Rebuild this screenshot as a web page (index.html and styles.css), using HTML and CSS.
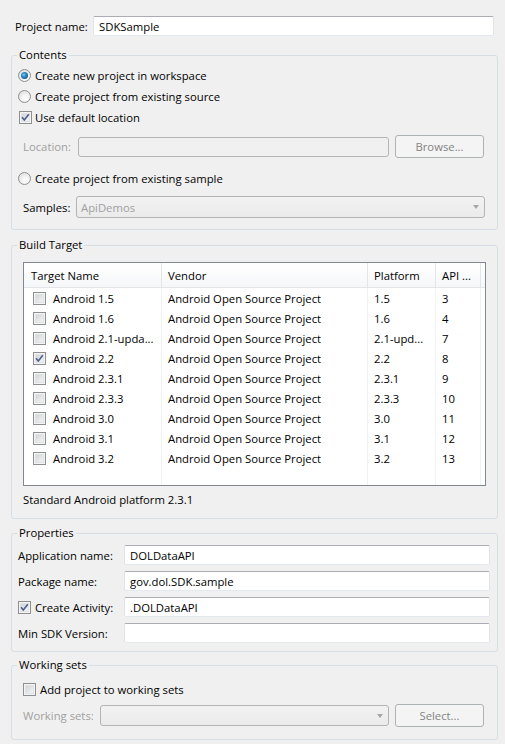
FILE: index.html
```html
<!DOCTYPE html>
<html>
<head>
<meta charset="utf-8">
<link rel="stylesheet" href="styles.css">
</head>
<body>
<div class="page">
  <div class="name-row">
    <span class="lbl name-lbl">Project name:</span>
    <input class="text" type="text" value="SDKSample">
  </div>

  <fieldset class="group">
    <legend>Contents</legend>
    <div class="gbody contents">
      <div class="opt"><span class="radio on"><span class="dot"></span></span><span>Create new project in workspace</span></div>
      <div class="opt"><span class="radio"></span><span>Create project from existing source</span></div>
      <div class="opt"><span class="cb cb-nudge on"><svg viewBox="0 0 11 11"><path d="M2 5.2 L4.3 8 L8.8 2.2" fill="none" stroke="#4b5f8e" stroke-width="1.6"/></svg></span><span>Use default location</span></div>
      <div class="field-row loc-row">
        <span class="lbl dis loc-lbl">Location:</span>
        <input class="text disabled" type="text" disabled>
        <button class="btn" disabled>Browse...</button>
      </div>
      <div class="opt sample-opt"><span class="radio"></span><span>Create project from existing sample</span></div>
      <div class="field-row samples-row">
        <span class="lbl samples-lbl">Samples:</span>
        <div class="combo"><span class="combo-text">ApiDemos</span><span class="arrow"></span></div>
      </div>
    </div>
  </fieldset>

  <fieldset class="group build">
    <legend>Build Target</legend>
    <div class="gbody targets">
      <div class="table-box">
        <table class="grid">
          <colgroup><col class="c1"><col class="c2"><col class="c3"><col class="c4"><col></colgroup>
          <thead>
            <tr><th class="first">Target Name</th><th>Vendor</th><th>Platform</th><th>API ...</th><th class="fill"></th></tr>
          </thead>
          <tbody>
            <tr><td class="first"><span class="cb"></span>Android 1.5</td><td>Android Open Source Project</td><td>1.5</td><td>3</td><td class="fill"></td></tr>
            <tr><td class="first"><span class="cb"></span>Android 1.6</td><td>Android Open Source Project</td><td>1.6</td><td>4</td><td class="fill"></td></tr>
            <tr><td class="first"><span class="cb"></span>Android 2.1-upda...</td><td>Android Open Source Project</td><td>2.1-upd...</td><td>7</td><td class="fill"></td></tr>
            <tr><td class="first"><span class="cb on"><svg viewBox="0 0 11 11"><path d="M2 5.2 L4.3 8 L8.8 2.2" fill="none" stroke="#4b5f8e" stroke-width="1.6"/></svg></span>Android 2.2</td><td>Android Open Source Project</td><td>2.2</td><td>8</td><td class="fill"></td></tr>
            <tr><td class="first"><span class="cb"></span>Android 2.3.1</td><td>Android Open Source Project</td><td>2.3.1</td><td>9</td><td class="fill"></td></tr>
            <tr><td class="first"><span class="cb"></span>Android 2.3.3</td><td>Android Open Source Project</td><td>2.3.3</td><td>10</td><td class="fill"></td></tr>
            <tr><td class="first"><span class="cb"></span>Android 3.0</td><td>Android Open Source Project</td><td>3.0</td><td>11</td><td class="fill"></td></tr>
            <tr><td class="first"><span class="cb"></span>Android 3.1</td><td>Android Open Source Project</td><td>3.1</td><td>12</td><td class="fill"></td></tr>
            <tr><td class="first"><span class="cb"></span>Android 3.2</td><td>Android Open Source Project</td><td>3.2</td><td>13</td><td class="fill"></td></tr>
            <tr class="filler"><td></td><td></td><td></td><td></td><td class="fill"></td></tr>
          </tbody>
        </table>
      </div>
      <div class="desc">Standard Android platform 2.3.1</div>
    </div>
  </fieldset>

  <fieldset class="group props">
    <legend>Properties</legend>
    <div class="gbody properties">
      <div class="prop-row"><span class="lbl prop-lbl">Application name:</span><input class="text" type="text" value="DOLDataAPI"></div>
      <div class="prop-row"><span class="lbl prop-lbl">Package name:</span><input class="text" type="text" value="gov.dol.SDK.sample"></div>
      <div class="prop-row"><span class="lbl prop-lbl check-lbl"><span class="cb on"><svg viewBox="0 0 11 11"><path d="M2 5.2 L4.3 8 L8.8 2.2" fill="none" stroke="#4b5f8e" stroke-width="1.6"/></svg></span>Create Activity:</span><input class="text" type="text" value=".DOLDataAPI"></div>
      <div class="prop-row"><span class="lbl prop-lbl">Min SDK Version:</span><input class="text" type="text" value=""></div>
    </div>
  </fieldset>

  <fieldset class="group wsets">
    <legend>Working sets</legend>
    <div class="gbody working">
      <div class="opt ws-opt"><span class="cb"></span><span>Add project to working sets</span></div>
      <div class="field-row ws-row">
        <span class="lbl dis ws-lbl">Working sets:</span>
        <div class="combo ws-combo"><span class="combo-text"></span><span class="arrow"></span></div>
        <button class="btn" disabled>Select...</button>
      </div>
    </div>
  </fieldset>
</div>
</body>
</html>
```

FILE: styles.css
```css
html, body {
  margin: 0;
  padding: 0;
  background: #f0f0f0;
}
body {
  font-family: "Open Sans", "Noto Sans", "Liberation Sans", sans-serif;
  font-size: 11.3px;
  color: #000;
  width: 505px;
  height: 744px;
  overflow: hidden;
}
.page {
  padding: 16px 7px 0 11px;
}
.lbl {
  flex: none;
  white-space: nowrap;
}
.dis {
  color: #a0a0a0;
}

/* project name */
.name-row {
  display: flex;
  align-items: center;
  height: 20px;
  padding: 0 4px;
}
.name-lbl {
  width: 78px;
}

/* text boxes */
.text {
  flex: 1;
  min-width: 0;
  box-sizing: border-box;
  height: 20px;
  margin: 0;
  padding: 0 5px;
  font: inherit;
  color: #000;
  background: #fff;
  border: 1px solid #e2e3ea;
  border-top-color: #abadb3;
  border-bottom-color: #e3e9ef;
  border-radius: 2px;
  outline: none;
}
.text.disabled {
  background: #f0f0f0;
  border: 1px solid #b5b5b5;
  border-radius: 3px;
}

/* groups */
.group {
  margin: 11px 0 0;
  padding: 0;
  border: 1px solid #d5dfe5;
  border-radius: 3px;
  min-width: 0;
}
.group legend {
  margin-left: 5px;
  padding: 0 2px;
  height: 16px;
  line-height: 16px;
}
.build { margin-top: 7px; }
.props { margin-top: 6px; }
.wsets { margin-top: 5px; }

.gbody {
  display: flex;
  flex-direction: column;
}
.contents {
  padding: 2px 13px 11px 6px;
}

.opt {
  display: flex;
  align-items: center;
  height: 21px;
  gap: 4px;
}
.sample-opt { margin-top: 10px; }

/* radio */
.radio {
  flex: none;
  position: relative;
  box-sizing: border-box;
  width: 13px;
  height: 13px;
  border-radius: 50%;
  border: 1px solid #8e8f8f;
  background: radial-gradient(circle at 60% 65%, #ffffff 0%, #f2f2f2 40%, #d6d6d6 100%);
}
.radio .dot {
  position: absolute;
  left: 2px;
  top: 2px;
  width: 7px;
  height: 7px;
  border-radius: 50%;
  background: radial-gradient(circle at 40% 40%, #7fd0f7 0%, #2a8ccc 35%, #0c3e66 100%);
}

/* checkbox */
.cb {
  flex: none;
  display: inline-block;
  box-sizing: border-box;
  width: 13px;
  height: 13px;
  border: 1px solid #8e8f8f;
  background: linear-gradient(135deg, #c8cbd0 0%, #e6e7e9 55%, #fafafa 100%);
  box-shadow: inset 0 0 0 1px #f4f4f4, inset 0 0 0 2px #e2e3e5;
  vertical-align: middle;
  position: relative;
}
.cb svg {
  position: absolute;
  left: 0;
  top: 0;
  width: 11px;
  height: 11px;
}
.cb-nudge { margin-left: 1px; margin-right: -1px; }

/* field rows */
.field-row {
  display: flex;
  align-items: center;
}
.loc-row {
  margin-top: 7px;
  height: 23px;
  padding-left: 5px;
}
.loc-lbl { width: 55px; }
.samples-row {
  margin-top: 7px;
  height: 22px;
  padding-left: 5px;
  margin-right: -1px;
}
.samples-lbl { width: 53px; }

/* buttons */
.btn {
  flex: none;
  box-sizing: border-box;
  width: 89px;
  height: 23px;
  margin: 0 0 0 6px;
  padding: 0;
  font: inherit;
  color: #838383;
  background: #f4f4f4;
  border: 1px solid #adb2b5;
  border-radius: 3px;
}

/* combo */
.combo {
  flex: 1;
  min-width: 0;
  box-sizing: border-box;
  height: 22px;
  display: flex;
  align-items: center;
  padding: 0 5px 0 4px;
  border: 1px solid #b4b4b4;
  border-radius: 3px;
  background: linear-gradient(#f2f2f2, #ebebeb);
  color: #a0a0a0;
}
.combo-text { flex: 1; }
.arrow {
  width: 0;
  height: 0;
  border-left: 3.5px solid transparent;
  border-right: 3.5px solid transparent;
  border-top: 4px solid #a6a6a6;
}

/* build target */
.targets {
  padding: 9px 11px 10px 11px;
}
.table-box {
  height: 224px;
  box-sizing: border-box;
  border: 1px solid #828790;
  background: #fff;
  overflow: hidden;
}
.grid {
  width: 100%;
  height: 100%;
  table-layout: fixed;
  border-collapse: separate;
  border-spacing: 0;
  font: inherit;
}
.c1 { width: 138px; }
.c2 { width: 206px; }
.c3 { width: 68px; }
.c4 { width: 45px; }
.grid th {
  box-sizing: border-box;
  height: 25px;
  padding: 0 0 0 6px;
  text-align: left;
  font-weight: normal;
  white-space: nowrap;
  overflow: hidden;
  background: linear-gradient(#ffffff, #f6f7f9);
  border-right: 1px solid #e3e5e8;
  border-bottom: 1px solid #e3e5e8;
}
.grid th.first { padding-left: 7px; }
.grid th.fill { border-right: none; }
.grid td {
  height: 20px;
  padding: 0 0 0 6px;
  white-space: nowrap;
  overflow: hidden;
  border-right: 1px solid #f0f2f5;
}
.grid td.first {
  padding-left: 9px;
}
.grid td.first .cb {
  margin-right: 7px;
  margin-top: -2px;
}
.grid td.fill { border-right: none; }
.grid tr.filler td { height: auto; }

.desc {
  margin-top: 6px;
  height: 16px;
  line-height: 16px;
}

/* properties */
.properties {
  padding: 4px 7px 8px 6px;
  gap: 6px;
}
.prop-row {
  display: flex;
  align-items: center;
  height: 20px;
}
.prop-lbl { width: 106px; }
.check-lbl {
  display: flex;
  align-items: center;
  gap: 4px;
}

/* working sets */
.working {
  padding: 6px 13px 12px 11px;
}
.ws-opt {
  height: 20px;
}
.ws-row {
  margin-top: 5px;
  height: 23px;
}
.ws-lbl { width: 77px; }
.ws-combo {
  height: 21px;
}
```
